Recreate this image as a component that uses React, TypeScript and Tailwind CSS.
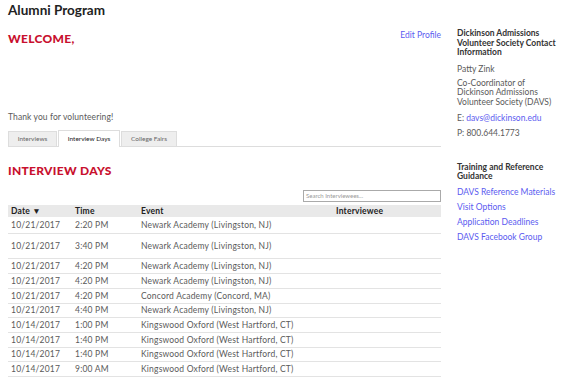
import React from 'react'

interface Row {
  date: string
  time: string
  event: string
  h: string
}

const rows: Row[] = [
  { date: '10/21/2017', time: '2:20 PM', event: 'Newark Academy (Livingston, NJ)', h: 'h-[16px]' },
  { date: '10/21/2017', time: '3:40 PM', event: 'Newark Academy (Livingston, NJ)', h: 'h-[25px]' },
  { date: '10/21/2017', time: '4:20 PM', event: 'Newark Academy (Livingston, NJ)', h: 'h-[15px]' },
  { date: '10/21/2017', time: '4:20 PM', event: 'Newark Academy (Livingston, NJ)', h: 'h-[15px]' },
  { date: '10/21/2017', time: '4:20 PM', event: 'Concord Academy (Concord, MA)', h: 'h-[15px]' },
  { date: '10/21/2017', time: '4:40 PM', event: 'Newark Academy (Livingston, NJ)', h: 'h-[14px]' },
  { date: '10/14/2017', time: '1:00 PM', event: 'Kingswood Oxford (West Hartford, CT)', h: 'h-[15px]' },
  { date: '10/14/2017', time: '1:40 PM', event: 'Kingswood Oxford (West Hartford, CT)', h: 'h-[15px]' },
  { date: '10/14/2017', time: '1:40 PM', event: 'Kingswood Oxford (West Hartford, CT)', h: 'h-[14px]' },
  { date: '10/14/2017', time: '9:00 AM', event: 'Kingswood Oxford (West Hartford, CT)', h: 'h-[15px]' },
]

const links = ['DAVS Reference Materials', 'Visit Options', 'Application Deadlines', 'DAVS Facebook Group']

function App() {
  return (
    <div className="w-[585px] h-[389px] overflow-hidden bg-white flex px-2 font-['Lato',sans-serif] text-[#5a5a5a]">
      {/* main column */}
      <div className="w-[433px] flex flex-col">
        <h1 className="text-[13.5px] font-bold text-[#222] leading-[16px] pt-[2px]">Alumni Program</h1>
        <div className="flex justify-between items-start mt-[12px] h-[82px]">
          <h2 className="text-[12px] font-black text-[#c8102e] leading-[16px] tracking-[0.3px] mt-[1px]">WELCOME,</h2>
          <a className="text-[8.5px] text-[#5b5bf0] leading-[10px]">Edit Profile</a>
        </div>
        <p className="text-[8.5px] leading-[10px] tracking-[0.1px]">Thank you for volunteering!</p>

        <div className="flex items-end mt-[8px] border-b border-[#ddd] h-[17px]">
          <div className="h-[15px] w-[49px] justify-center flex items-center bg-[#eee] border border-[#ddd] border-b-0 text-[6.5px] text-[#666] mr-[1px]">Interviews</div>
          <div className="h-[17px] w-[62px] justify-center flex items-center bg-white border border-[#ddd] border-b-0 -mb-px text-[6.5px] text-[#222] mr-[1px]">Interview Days</div>
          <div className="h-[15px] w-[56px] justify-center flex items-center bg-[#eee] border border-[#ddd] border-b-0 text-[6.5px] text-[#666]">College Fairs</div>
        </div>

        <h2 className="text-[12px] font-black text-[#c8102e] leading-[16px] tracking-[0.3px] mt-[16px]">INTERVIEW DAYS</h2>

        <div className="flex justify-end mt-[11px]">
          <div className="w-[138px] h-[12px] border border-[#aaa] text-[6px] text-[#999] px-[2px] leading-[10px]">Search Interviewees...</div>
        </div>

        <table className="w-full mt-[3px] text-[8.5px] tracking-[0.2px] border-collapse table-fixed">
          <thead>
            <tr className="bg-[#e9e9e9] h-[12px] text-[#222] leading-[10px]">
              <th className="text-left font-bold pl-[3px] w-[67px]">Date ▼</th>
              <th className="text-left font-bold w-[66px]">Time</th>
              <th className="text-left font-bold w-[192px]">Event</th>
              <th className="text-left font-bold pl-[3px]">Interviewee</th>
            </tr>
          </thead>
          <tbody>
            {rows.map((r, i) => (
              <tr key={i} className={`border-b border-[#e3e3e3] leading-[10px] ${r.h}`}>
                <td className="pl-[3px]">{r.date}</td>
                <td>{r.time}</td>
                <td className="whitespace-nowrap">{r.event}</td>
                <td></td>
              </tr>
            ))}
          </tbody>
        </table>
      </div>

      {/* right column */}
      <div className="ml-4 w-[120px] flex flex-col text-[8.5px] leading-[9.5px]">
        <div className="font-bold text-[#333] mt-[29px]">Dickinson Admissions<br />Volunteer Society Contact<br />Information</div>
        <div className="mt-[7px]">Patty Zink</div>
        <div className="mt-[4.5px]">Co-Coordinator of<br />Dickinson Admissions<br />Volunteer Society (DAVS)</div>
        <div className="mt-[6.5px]">E: <span className="text-[#5b5bf0]">davs@dickinson.edu</span></div>
        <div className="mt-[5.5px]">P: 800.644.1773</div>
        <div className="font-bold text-[#333] mt-[24.5px]">Training and Reference<br />Guidance</div>
        <div className="flex flex-col gap-[5.8px] mt-[6px] text-[#5b5bf0]">
          {links.map(l => <a key={l}>{l}</a>)}
        </div>
      </div>
    </div>
  )
}

export default App
